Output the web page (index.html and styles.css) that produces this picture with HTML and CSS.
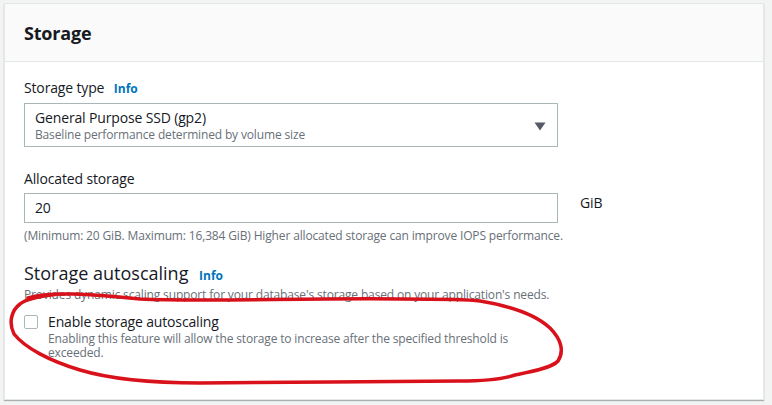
FILE: index.html
```html
<!DOCTYPE html>
<html>
<head>
<meta charset="utf-8">
<link rel="stylesheet" href="styles.css">
</head>
<body>
<div class="card">
  <div class="card-header"><h2>Storage</h2></div>
  <div class="card-body">
    <div class="field">
      <div class="label">Storage type <span class="info">Info</span></div>
      <div class="select">
        <div class="select-text">
          <div class="select-main">General Purpose SSD (gp2)</div>
          <div class="select-sub">Baseline performance determined by volume size</div>
        </div>
        <svg class="caret" width="12" height="9" viewBox="0 0 12 9"><path d="M0.5 0.5 H11.5 L6 8.5 Z" fill="#545b64"/></svg>
      </div>
    </div>
    <div class="field field-alloc">
      <div class="label">Allocated storage</div>
      <div class="input-row">
        <div class="input">20</div>
        <div class="unit">GiB</div>
      </div>
      <div class="hint">(Minimum: 20 GiB. Maximum: 16,384 GiB) Higher allocated storage can improve IOPS performance.</div>
    </div>
    <div class="section">
      <div class="section-title">Storage autoscaling <span class="info">Info</span></div>
      <div class="hint">Provides dynamic scaling support for your database's storage based on your application's needs.</div>
      <div class="check-row">
        <span class="checkbox"></span>
        <div class="check-text">
          <div class="check-label">Enable storage autoscaling</div>
          <div class="check-desc">Enabling this feature will allow the storage to increase after the specified threshold is exceeded.</div>
        </div>
      </div>
    </div>
  </div>
</div>
<svg class="annotation" width="772" height="405" viewBox="0 0 772 405">
  <path d="M28 298 C50 291 90 294 140 299 C200 302 300 298 400 299 C440 299 465 299 480 301 C510 306 535 314 550 328 C562 340 564 352 558 361 C552 368 530 372 515 375 C500 380 480 381 460 381 C380 381 280 383 200 383 C150 383 110 379 80 370 C50 361 25 348 14 334 C8 322 12 310 20 304 C26 299 40 296 60 294" fill="none" stroke="#d9111b" stroke-width="3.5" stroke-linecap="round" stroke-linejoin="round"/>
</svg>
</body>
</html>
```
FILE: styles.css
```css
html, body {
  margin: 0;
  padding: 0;
}
body {
  position: relative;
  width: 772px;
  height: 405px;
  background: #f2f3f3;
  font-family: "Open Sans", "Noto Sans", Arial, sans-serif;
  color: #16191f;
  letter-spacing: -0.15px;
  overflow: hidden;
  padding-top: 3px;
  box-sizing: border-box;
}
.card {
  margin-left: 4px;
  width: 760px;
  height: 397px;
  box-sizing: border-box;
  background: #fff;
  border: 1px solid #e4e7e7;
  box-shadow: 0 1px 1px rgba(0, 28, 36, 0.3);
}
.card-header {
  height: 58px;
  box-sizing: border-box;
  background: #fafafa;
  border-bottom: 1px solid #e4e7e7;
  padding: 18px 19px 0;
}
.card-header h2 {
  margin: 0;
  font-size: 18px;
  line-height: 22px;
  font-weight: 700;
  letter-spacing: -0.2px;
}
.card-body {
  padding: 16px 19px 0;
}
.field {
  width: 534px;
}
.label {
  font-size: 14px;
  line-height: 20px;
  margin-bottom: 4px;
}
.info {
  color: #0073bb;
  font-weight: 700;
  font-size: 12px;
  margin-left: 6px;
  letter-spacing: 0;
}
.select {
  height: 44px;
  box-sizing: border-box;
  border: 1px solid #aab7b8;
  display: flex;
  align-items: center;
  justify-content: space-between;
  padding: 0 11px 0 10px;
}
.select-main {
  font-size: 14px;
  line-height: 18px;
}
.select-sub {
  font-size: 12px;
  line-height: 15px;
  color: #687078;
}
.caret {
  margin-top: 2px;
}
.field-alloc {
  margin-top: 22px;
  width: auto;
}
.input-row {
  display: flex;
  align-items: flex-start;
}
.input {
  width: 534px;
  height: 30px;
  box-sizing: border-box;
  border: 1px solid #aab7b8;
  font-size: 14px;
  line-height: 28px;
  padding-left: 10px;
}
.unit {
  font-size: 14px;
  line-height: 20px;
  margin-left: 22px;
}
.hint {
  font-size: 12px;
  line-height: 16px;
  color: #687078;
  margin-top: 5px;
}
.section {
  margin-top: 18px;
}
.section-title {
  font-size: 18px;
  line-height: 22px;
  letter-spacing: 0;
}
.section .hint {
  margin-top: 0;
}
.check-row {
  display: flex;
  align-items: flex-start;
  margin-top: 9px;
  width: 534px;
}
.checkbox {
  width: 14px;
  height: 14px;
  box-sizing: border-box;
  border: 1px solid #aab7b8;
  border-radius: 2px;
  margin-top: 3px;
  flex: none;
}
.check-text {
  margin-left: 10px;
}
.check-label {
  font-size: 14px;
  line-height: 20px;
}
.check-desc {
  font-size: 12px;
  line-height: 14px;
  color: #687078;
}
.annotation {
  position: absolute;
  top: 0;
  left: 0;
  pointer-events: none;
}
```
